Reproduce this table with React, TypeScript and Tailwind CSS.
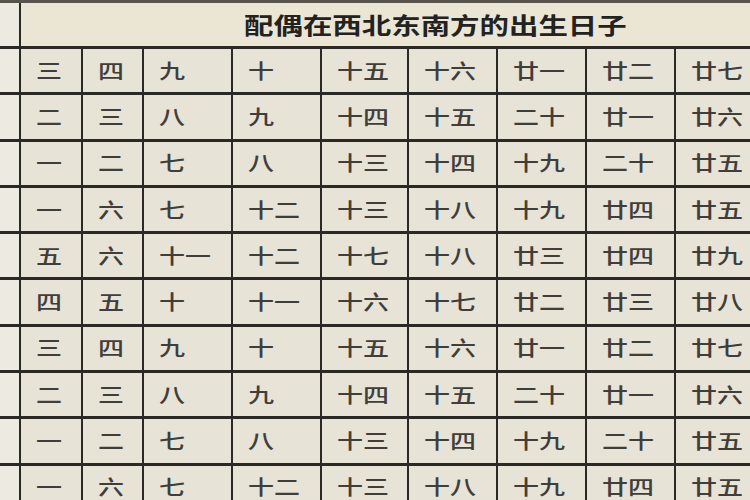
const rows: string[][] = [
  ["三", "四", "九", "十", "十五", "十六", "廿一", "廿二", "廿七"],
  ["二", "三", "八", "九", "十四", "十五", "二十", "廿一", "廿六"],
  ["一", "二", "七", "八", "十三", "十四", "十九", "二十", "廿五"],
  ["一", "六", "七", "十二", "十三", "十八", "十九", "廿四", "廿五"],
  ["五", "六", "十一", "十二", "十七", "十八", "廿三", "廿四", "廿九"],
  ["四", "五", "十", "十一", "十六", "十七", "廿二", "廿三", "廿八"],
  ["三", "四", "九", "十", "十五", "十六", "廿一", "廿二", "廿七"],
  ["二", "三", "八", "九", "十四", "十五", "二十", "廿一", "廿六"],
  ["一", "二", "七", "八", "十三", "十四", "十九", "二十", "廿五"],
  ["一", "六", "七", "十二", "十三", "十八", "十九", "廿四", "廿五"],
];

const font = { fontFamily: '"Noto Sans CJK SC", "Noto Sans", sans-serif' };

export default function App() {
  return (
    <div className="h-[500px] w-[750px] overflow-hidden bg-[#2a2926]" style={font}>
      <div className="grid grid-cols-[19px_60px_59px_87px_87px_85px_87px_87px_87px_120px] auto-rows-[43.3px] grid-rows-[43px] gap-x-[2px] gap-y-[3px] border-t-[3px] border-[#57534a]">
        <div className="bg-[#edeae1]" />
        <div className="col-span-9 flex items-center bg-[#ebe6d4] pl-[223px]">
          <span className="inline-block origin-left scale-x-[1.28] whitespace-nowrap text-[23px] font-bold leading-none text-[#222]">
            配偶在西北东南方的出生日子
          </span>
        </div>
        {rows.map((row, i) => (
          <Row key={i} cells={row} />
        ))}
      </div>
    </div>
  );
}

function Row({ cells }: { cells: string[] }) {
  return (
    <>
      <div className="bg-[#edeae1]" />
      {cells.map((c, j) => (
        <div key={j} className="flex items-center bg-[#e7e3d7] pl-[15px]">
          <span className="inline-block origin-left scale-x-[1.3] whitespace-nowrap text-[20px] font-medium leading-none text-[#403e3a]">
            {c}
          </span>
        </div>
      ))}
    </>
  );
}
